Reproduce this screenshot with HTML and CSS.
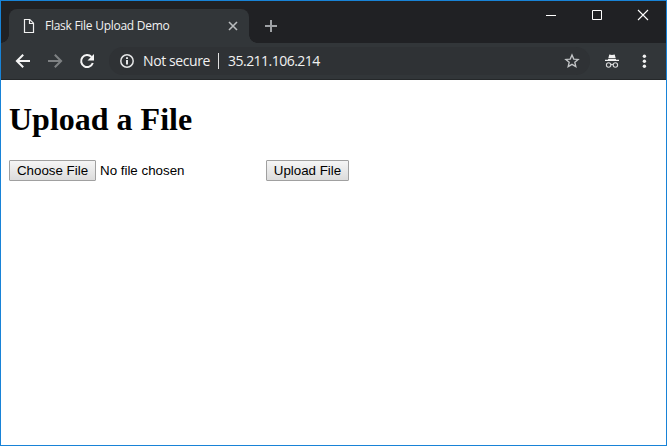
FILE: index.html
```html
<!DOCTYPE html>
<html lang="en">
<head>
<meta charset="utf-8">
<title>Flask File Upload Demo</title>
<link rel="stylesheet" href="styles.css">
</head>
<body>
<div class="window">
  <header class="titlebar">
    <div class="tab">
      <svg class="page-icon" width="12" height="14" viewBox="0 0 12 14"><path d="M1.5.5h5.3l3.7 3.7v9.3h-9z M6.5.5v4h4" fill="none" stroke="#f1f1f1" stroke-width="1.2"/></svg>
      <span class="tab-title">Flask File Upload Demo</span>
      <svg class="tab-close" width="10" height="10" viewBox="0 0 10 10"><path d="M1 1l8 8M9 1L1 9" stroke="#b9bcbe" stroke-width="1.6"/></svg>
    </div>
    <svg class="new-tab" width="12" height="12" viewBox="0 0 12 12"><path d="M6 0v12M0 6h12" stroke="#9fa2a5" stroke-width="2"/></svg>
    <div class="controls">
      <svg width="46" height="28" viewBox="0 0 46 28"><path d="M18 14.5h10" stroke="#fff"/></svg>
      <svg width="46" height="28" viewBox="0 0 46 28"><path d="M18.5 9.500h9v9h-9z" fill="none" stroke="#fff"/></svg>
      <svg width="46" height="28" viewBox="0 0 46 28"><path d="M18 9l10 10M28 9L18 19" stroke="#fff" stroke-width="1.1"/></svg>
    </div>
  </header>
  <nav class="toolbar">
    <svg class="back" width="16" height="16" viewBox="0 0 16 16"><path d="M15 8H2.200M8.200 1.700L1.900 8l6.300 6.300" fill="none" stroke="#f5f5f5" stroke-width="2"/></svg>
    <svg class="forward" width="16" height="16" viewBox="0 0 16 16"><path d="M1 8h12.800M7.800 1.700L14.100 8l-6.300 6.300" fill="none" stroke="#7e8183" stroke-width="2"/></svg>
    <svg class="reload" width="16" height="16" viewBox="0 0 16 16"><path d="M13.800 10A6 6 0 1 1 12.500 3.900" fill="none" stroke="#f5f5f5" stroke-width="2"/><path d="M15 1v6.500H8.500z" fill="#f5f5f5"/></svg>
    <div class="omnibox">
      <svg class="info" width="14" height="14" viewBox="0 0 14 14"><circle cx="7" cy="7" r="6.200" fill="none" stroke="#e4e5e6" stroke-width="1.500"/><path d="M7 6v4.500M7 3.300v1.800" stroke="#e4e5e6" stroke-width="2"/></svg>
      <span class="secure">Not secure</span>
      <span class="divider"></span>
      <span class="url">35.211.106.214</span>
      <svg class="star" width="16" height="16" viewBox="0 0 16 16"><path d="M8 2l1.750 4.050 4.400.4-3.330 2.900 1 4.300L8 11.400l-3.820 2.250 1-4.300-3.330-2.900 4.400-.4z" fill="none" stroke="#c3c5c7" stroke-width="1.350"/></svg>
    </div>
    <svg class="incognito" width="14" height="14" viewBox="0 0 14 14"><path d="M4.300.5Q7 1.300 9.700.5L10.700 4.200H3.300zM0 5.800h14v1.200H0z" fill="#f1f1f1"/><path d="M3 5h8v1H3z" fill="#f1f1f1"/><g fill="none" stroke="#d8d9da" stroke-width="1.100"><circle cx="3.600" cy="11" r="2.200"/><circle cx="10.400" cy="11" r="2.200"/><path d="M5.800 10.700q1.200-.7 2.400 0"/></g></svg>
    <svg class="menu" width="4" height="14" viewBox="0 0 4 14"><g fill="#f1f1f1"><circle cx="2.400" cy="2.300" r="1.700"/><circle cx="2.400" cy="7.300" r="1.700"/><circle cx="2.400" cy="12.300" r="1.700"/></g></svg>
  </nav>
  <main class="page">
    <h1>Upload a File</h1>
    <form class="upload">
      <button class="btn choose" type="button">Choose File</button>
      <span class="filename">No file chosen</span>
      <button class="btn submit" type="button">Upload File</button>
    </form>
  </main>
</div>
</body>
</html>
```

FILE: styles.css
```css
* { box-sizing: border-box; }
body { margin: 0; }
svg { display: block; flex: none; overflow: visible; }
.window {
  height: 446px;
  border: 1px solid #1883d7;
  background: #fff;
  display: flex;
  flex-direction: column;
  overflow: hidden;
}
.titlebar {
  height: 42px;
  flex: none;
  background: #202124;
  display: flex;
  align-items: flex-end;
  padding-left: 8px;
  font-family: "Open Sans", "Noto Sans", sans-serif;
}
.tab {
  position: relative;
  width: 240px;
  height: 34px;
  background: #323639;
  border-radius: 8px 8px 0 0;
  display: flex;
  align-items: center;
  padding: 0 11px 0 14px;
}
.tab::before,
.tab::after {
  content: "";
  position: absolute;
  bottom: 0;
  width: 8px;
  height: 8px;
}
.tab::before {
  left: -8px;
  background: radial-gradient(circle at 0 0, transparent 7.500px, #323639 8px);
}
.tab::after {
  right: -8px;
  background: radial-gradient(circle at 100% 0, transparent 7.500px, #323639 8px);
}
.tab-title {
  margin-left: 10px;
  font-size: 12px;
  line-height: 16px;
  letter-spacing: -0.270px;
  color: #f1f1f1;
  white-space: nowrap;
}
.tab-close { margin-left: auto; }
.new-tab { margin: 0 0 11px 16px; }
.controls {
  display: flex;
  align-self: flex-start;
  margin-left: auto;
}
.toolbar {
  height: 37px;
  flex: none;
  background: #323639;
  border-bottom: 1px solid #25282a;
  display: flex;
  align-items: center;
  padding: 0 20px 0 14px;
  font-family: "Open Sans", "Noto Sans", sans-serif;
}
.forward { margin-left: 16px; }
.reload { margin-left: 16px; }
.omnibox {
  width: 481px;
  height: 28px;
  margin-left: 14px;
  border-radius: 14px;
  background: #2f3235;
  display: flex;
  align-items: center;
  padding: 0 10px 0 11px;
  font-size: 14px;
  line-height: 20px;
  color: #f1f1f1;
  white-space: nowrap;
}
.secure {
  width: 67px;
  margin-left: 9px;
  letter-spacing: -0.400px;
}
.divider {
  width: 1px;
  height: 16px;
  margin: 0 9px 0 8px;
  background: #e0e0e0;
}
.url { letter-spacing: -0.520px; }
.star { margin-left: auto; }
.incognito { margin-left: 15px; }
.menu { margin-left: auto; }
.page { padding: 0 8px; }
h1 {
  margin: 21px 0 22px;
  font: bold 32px/37px "Liberation Serif", serif;
  color: #000;
}
.upload {
  display: flex;
  align-items: center;
  font: 13.333px/15px "Liberation Sans", sans-serif;
  color: #000;
}
.btn {
  height: 21px;
  padding: 0;
  border: 1px solid #a0a0a0;
  border-radius: 1px;
  background: linear-gradient(#f5f5f5, #dcdcdc);
  font: inherit;
  color: #000;
  white-space: nowrap;
}
.choose { width: 87px; }
.submit { width: 83px; }
.filename { width: 166px; margin-left: 4px; }
```
